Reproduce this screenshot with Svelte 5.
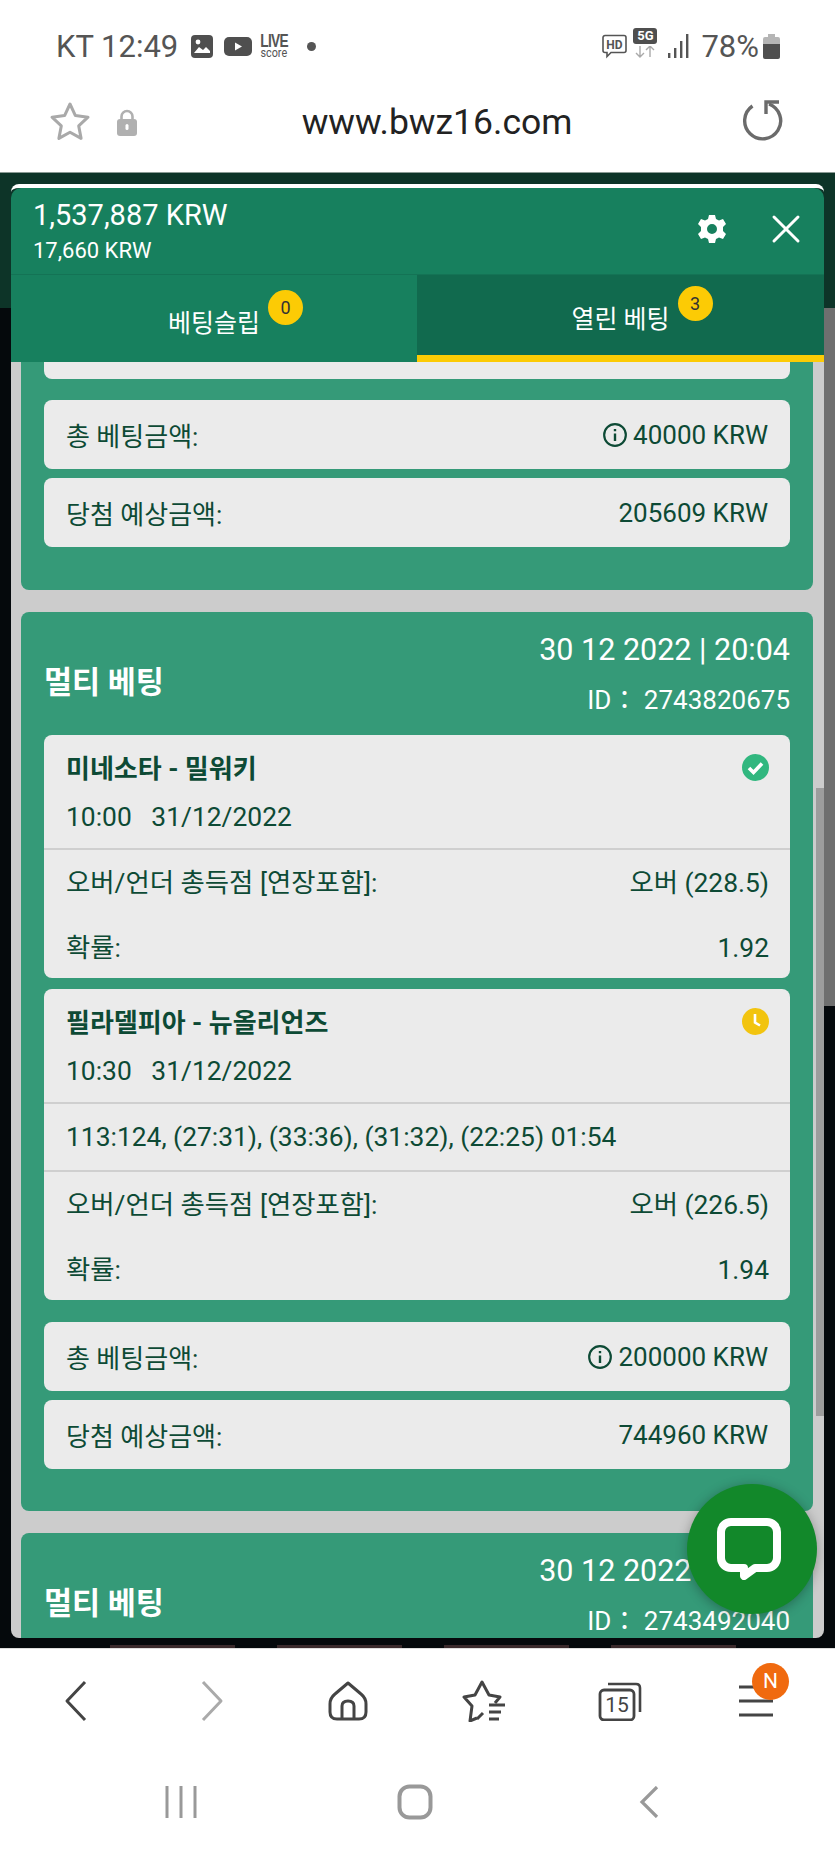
<script>
	const bets = [
		{
			date: '30 12 2022 | 20:04',
			id: '2743820675',
			games: [
				{
					name: '미네소타 - 밀워키',
					time: '10:00',
					day: '31/12/2022',
					state: 'won',
					market: '오버 (228.5)',
					odds: '1.92'
				},
				{
					name: '필라델피아 - 뉴올리언즈',
					time: '10:30',
					day: '31/12/2022',
					state: 'live',
					score: '113:124, (27:31), (33:36), (31:32), (22:25) 01:54',
					market: '오버 (226.5)',
					odds: '1.94'
				}
			],
			stake: '200000 KRW',
			payout: '744960 KRW'
		}
	];
	const thumbs = [1, 2, 3, 4];
</script>

<div class="phone">
	<header class="status">
		<span class="status-text">KT 12:49</span>
		<svg class="ic-photo" width="22" height="23" viewBox="0 0 22 23">
			<rect width="22" height="23" rx="4" fill="#4f4f4f" />
			<circle cx="7" cy="7" r="2.4" fill="#fff" />
			<path d="M3 18l5-6 4 3 3-3 4 4v2H3z" fill="#fff" />
		</svg>
		<svg class="ic-yt" width="28" height="19" viewBox="0 0 28 19">
			<rect width="28" height="19" rx="5" fill="#4f4f4f" />
			<path d="M11 5.5l7 4-7 4z" fill="#fff" />
		</svg>
		<span class="live"><b>LIVE</b><i>score</i></span>
		<span class="dot"></span>
		<span class="spacer"></span>
		<svg class="ic-hd" width="25" height="25" viewBox="0 0 25 25">
			<path d="M3 1.5h19a2 2 0 0 1 2 2v13a2 2 0 0 1-2 2H9l-4 4v-4H3a2 2 0 0 1-2-2v-13a2 2 0 0 1 2-2z" fill="none" stroke="#555" stroke-width="1.6" />
			<text x="12.5" y="14.5" text-anchor="middle" class="hd-label">HD</text>
		</svg>
		<span class="net">
			<span class="net-5g">5G</span>
			<svg width="22" height="12" viewBox="0 0 22 12">
				<path d="M6 0v11M2 7l4 4 4-4M16 11V0M12 4l4-4 4 4" fill="none" stroke="#aaa" stroke-width="1.4" />
			</svg>
		</span>
		<svg class="ic-signal" width="21" height="24" viewBox="0 0 21 24">
			<rect x="0" y="19" width="2.400" height="5" fill="#555" />
			<rect x="6" y="14" width="2.400" height="10" fill="#555" />
			<rect x="12" y="7" width="2.400" height="17" fill="#555" />
			<rect x="18" y="0" width="2.400" height="24" fill="#555" />
		</svg>
		<span class="status-text pct">78%</span>
		<svg class="ic-batt" width="17" height="25" viewBox="0 0 17 25">
			<path d="M5 0h7v3h3a2 2 0 0 1 2 2v5H0V5a2 2 0 0 1 2-2h3z" fill="#b5b5b5" />
			<path d="M0 10h17v13a2 2 0 0 1-2 2H2a2 2 0 0 1-2-2z" fill="#4f4f4f" />
		</svg>
	</header>

	<div class="urlbar">
		<svg class="ic-star" width="42" height="42" viewBox="0 0 42 42">
			<path d="M21 3l5.4 11.6 12.6 1.6-9.300 8.700 2.400 12.500L21 31.200 9.900 37.400l2.400-12.500L3 16.200l12.600-1.600z" fill="none" stroke="#a9a9a9" stroke-width="3" stroke-linejoin="round" />
		</svg>
		<svg class="ic-lock" width="20" height="27" viewBox="0 0 20 27">
			<path d="M4.500 12V7.500a5.500 5.500 0 0 1 11 0V12" fill="none" stroke="#b0b0b0" stroke-width="2.600" />
			<rect y="10" width="20" height="17" rx="3" fill="#b0b0b0" />
			<rect x="8.500" y="15" width="3" height="6" rx="1.500" fill="#fff" />
		</svg>
		<span class="url">www.bwz16.com</span>
		<svg class="ic-reload" width="42" height="42" viewBox="0 0 42 42">
			<path d="M11.500 7A18 18 0 1 0 28 5" fill="none" stroke="#6b6b6b" stroke-width="3.400" />
			<path d="M38 3H25v12" fill="none" stroke="#6b6b6b" stroke-width="3.400" />
		</svg>
	</div>

	<div class="stage">
		<section class="panel">
			<div class="panel-top">
				<div class="balance">
					<div class="balance-main">1,537,887 KRW</div>
					<div class="balance-sub">17,660 KRW</div>
				</div>
				<svg class="ic-gear" width="30" height="30" viewBox="0 0 30 30">
					<path fill="#fff" fill-rule="evenodd" d="M12 1h6l1 4 3 1.500 4-1.500 3 5-3 3v4l3 3-3 5-4-1.500L19 25l-1 4h-6l-1-4-3-1.500L4 25l-3-5 3-3v-4L1 10l3-5 4 1.500L11 5zM15 10a5 5 0 1 0 0 10 5 5 0 0 0 0-10z" />
				</svg>
				<svg class="ic-close" width="30" height="30" viewBox="0 0 30 30">
					<path d="M3 3l24 24M27 3L3 27" stroke="#fff" stroke-width="3" stroke-linecap="round" />
				</svg>
			</div>
			<nav class="tabs">
				<div class="tab">
					<span class="tab-label">베팅슬립<span class="badge">0</span></span>
				</div>
				<div class="tab active">
					<span class="tab-label">열린 베팅<span class="badge">3</span></span>
				</div>
			</nav>
			<div class="body">
				<div class="scroller">
					<article class="bet first">
						<div class="stub"></div>
						<div class="summary">
							<span>총 베팅금액:</span>
							<span class="amount">
								<svg width="26" height="26" viewBox="0 0 24 24">
									<circle cx="12" cy="12" r="10" fill="none" stroke="#0d4a35" stroke-width="2" />
									<path d="M12 10.500v7M12 6.500v2" stroke="#0d4a35" stroke-width="2.200" />
								</svg>
								40000 KRW
							</span>
						</div>
						<div class="summary">
							<span>당첨 예상금액:</span>
							<span>205609 KRW</span>
						</div>
					</article>

					{#each bets as bet}
						<article class="bet">
							<div class="bet-head">
								<h2>멀티 베팅</h2>
								<div class="bet-meta">
									<div class="bet-date">{bet.date}</div>
									<div class="bet-id">ID： {bet.id}</div>
								</div>
							</div>
							<div class="games">
								{#each bet.games as game}
									<div class="game">
										<div class="game-head">
											<div>
												<div class="game-name">{game.name}</div>
												<div class="game-time">{game.time}&nbsp;&nbsp; {game.day}</div>
											</div>
											{#if game.state === 'won'}
												<svg class="state" width="27" height="27" viewBox="0 0 27 27">
													<circle cx="13.500" cy="13.500" r="13.500" fill="#31b77f" />
													<path d="M7 14l4.500 4.500L20 9.500" fill="none" stroke="#fff" stroke-width="3.600" />
												</svg>
											{:else}
												<svg class="state" width="27" height="27" viewBox="0 0 27 27">
													<circle cx="13.500" cy="13.500" r="13.500" fill="#f2c40f" />
													<path d="M13 6v8.500l5 3" fill="none" stroke="#fff" stroke-width="2.600" />
												</svg>
											{/if}
										</div>
										{#if game.score}
											<div class="game-score">{game.score}</div>
										{/if}
										<div class="game-rows">
											<div class="game-row">
												<span>오버/언더 총득점 [연장포함]:</span>
												<span>{game.market}</span>
											</div>
											<div class="game-row">
												<span>확률:</span>
												<span>{game.odds}</span>
											</div>
										</div>
									</div>
								{/each}
							</div>
							<div class="summary">
								<span>총 베팅금액:</span>
								<span class="amount">
									<svg width="26" height="26" viewBox="0 0 24 24">
										<circle cx="12" cy="12" r="10" fill="none" stroke="#0d4a35" stroke-width="2" />
										<path d="M12 10.500v7M12 6.500v2" stroke="#0d4a35" stroke-width="2.200" />
									</svg>
									{bet.stake}
								</span>
							</div>
							<div class="summary">
								<span>당첨 예상금액:</span>
								<span>{bet.payout}</span>
							</div>
						</article>
					{/each}

					<article class="bet">
						<div class="bet-head">
							<h2>멀티 베팅</h2>
							<div class="bet-meta">
								<div class="bet-date">30 12 2022 | 19:12</div>
								<div class="bet-id">ID： 2743492040</div>
							</div>
						</div>
					</article>
				</div>
				<div class="track"><div class="thumb"></div></div>
			</div>
			<button class="chat" aria-label="chat">
				<svg width="64" height="62" viewBox="0 0 64 62">
					<path d="M14 4h36a10 10 0 0 1 10 10v26a10 10 0 0 1-10 10H38l-11 8v-8H14A10 10 0 0 1 4 40V14A10 10 0 0 1 14 4z" fill="none" stroke="#fff" stroke-width="8" stroke-linejoin="round" />
				</svg>
			</button>
		</section>
		<div class="thumbs">
			{#each thumbs as t}
				<span class="thumbnail"></span>
			{/each}
		</div>
	</div>

	<nav class="browser-nav">
		<svg width="24" height="42" viewBox="0 0 24 42">
			<path d="M21 2L3 21l18 19" fill="none" stroke="#444" stroke-width="3" stroke-linejoin="round" />
		</svg>
		<svg width="24" height="42" viewBox="0 0 24 42">
			<path d="M3 2l18 19L3 40" fill="none" stroke="#aaa" stroke-width="3" stroke-linejoin="round" />
		</svg>
		<svg width="40" height="40" viewBox="0 0 40 40">
			<path d="M20 2L33 13Q38 17 38 23v8q0 7-7 7H9q-7 0-7-7v-8q0-6 5-10z" fill="none" stroke="#444" stroke-width="3" stroke-linejoin="round" />
			<path d="M14 37V25q0-5 6-5t6 5v12" fill="none" stroke="#444" stroke-width="3" />
		</svg>
		<svg width="44" height="42" viewBox="0 0 44 42">
			<path d="M15 38l-7 3 2-15L2 17l11-2 7-13 7 13 11 2-5 6" fill="none" stroke="#444" stroke-width="3" stroke-linejoin="round" />
			<path d="M15 39l6-6M27 25h16M27 32h12M27 39h10" fill="none" stroke="#444" stroke-width="3" />
		</svg>
		<span class="tabs-ic">
			<svg width="44" height="40" viewBox="0 0 44 40">
				<path d="M10 3h28q4 0 4 4v24" fill="none" stroke="#444" stroke-width="2.600" />
				<rect x="2" y="9" width="34" height="30" rx="4" fill="#fff" stroke="#444" stroke-width="2.800" />
			</svg>
			<span class="tabs-count">15</span>
		</span>
		<span class="menu-ic">
			<svg width="34" height="34" viewBox="0 0 34 34">
				<path d="M0 3h34M0 17h34M0 31h34" stroke="#444" stroke-width="3.200" />
			</svg>
			<span class="menu-badge">N</span>
		</span>
	</nav>

	<div class="system-nav">
		<svg width="32" height="32" viewBox="0 0 32 32">
			<path d="M2 0v32M16 0v32M30 0v32" stroke="#999" stroke-width="3" />
		</svg>
		<svg width="36" height="36" viewBox="0 0 36 36">
			<rect x="2.500" y="2.500" width="31" height="31" rx="10" fill="none" stroke="#999" stroke-width="4" />
		</svg>
		<svg width="20" height="32" viewBox="0 0 20 32">
			<path d="M18 1L3 16l15 15" fill="none" stroke="#999" stroke-width="3.200" />
		</svg>
	</div>
</div>

<style>
	:global(body) {
		margin: 0;
		background: #fff;
	}

	.phone {
		width: 835px;
		height: 1856px;
		display: flex;
		flex-direction: column;
		overflow: hidden;
		font-family: Roboto, 'Noto Sans CJK KR', sans-serif;
	}

	/* --- Status bar --- */
	.status {
		height: 92px;
		box-sizing: border-box;
		padding: 0 55px 0 56px;
		display: flex;
		align-items: center;
		flex-shrink: 0;
	}
	.status-text {
		font-size: 31px;
		color: #555;
		white-space: nowrap;
	}
	.ic-photo {
		margin-left: 13px;
	}
	.ic-yt {
		margin-left: 11px;
	}
	.live {
		margin-left: 8px;
		width: 28px;
		display: flex;
		flex-direction: column;
		align-items: center;
		color: #555;
		line-height: 1;
	}
	.live b {
		font-size: 19px;
		line-height: 15px;
		font-family: 'Liberation Sans', sans-serif;
		letter-spacing: -1px;
		transform: scaleX(0.72);
	}
	.live i {
		font-style: normal;
		font-size: 12px;
		line-height: 11px;
		transform: scaleX(0.9);
	}
	.dot {
		margin-left: 19px;
		width: 9px;
		height: 9px;
		border-radius: 50%;
		background: #555;
	}
	.spacer {
		flex: 1;
	}
	.hd-label {
		font: bold 12px Roboto, sans-serif;
		fill: #555;
	}
	.net {
		margin-left: 6px;
		width: 24px;
		display: flex;
		flex-direction: column;
		align-items: center;
		margin-top: -6px;
		gap: 2px;
	}
	.net-5g {
		width: 24px;
		height: 16px;
		border-radius: 3px;
		background: #4f4f4f;
		color: #fff;
		font: bold 13px/16px Roboto, sans-serif;
		text-align: center;
	}
	.ic-signal {
		margin-left: 11px;
	}
	.pct {
		margin-left: 12px;
	}
	.ic-batt {
		margin-left: 4px;
	}

	/* --- Url bar --- */
	.urlbar {
		height: 80px;
		box-sizing: border-box;
		padding: 0 52px 20px 49px;
		display: flex;
		align-items: center;
		flex-shrink: 0;
		background: #fff;
	}
	.ic-lock {
		margin-left: 26px;
	}
	.url {
		flex: 1;
		text-align: center;
		font-size: 35.5px;
		color: #222;
		padding-right: 4px;
	}
	.ic-reload {
		margin-bottom: 4px;
	}

	/* --- Stage behind the betting panel --- */
	.stage {
		flex: 1;
		min-height: 0;
		position: relative;
		display: flex;
		flex-direction: column;
		box-sizing: border-box;
		padding: 11px 0 0 11px;
		background-color: #05090c;
		background-image:
			linear-gradient(#0d3428, #0d3428),
			linear-gradient(#6f6f6f, #6f6f6f);
		background-repeat: no-repeat;
		background-size:
			100% 135px,
			11px 833px;
		background-position:
			0 0,
			100% 0;
		border-top: 1px solid #8a9a94;
	}

	.panel {
		flex: 1;
		min-height: 0;
		width: 813px;
		position: relative;
		display: flex;
		flex-direction: column;
		border-radius: 8px;
		overflow: hidden;
		border-top: 4px solid #fff;
	}
	.panel-top {
		height: 86px;
		flex-shrink: 0;
		box-sizing: border-box;
		padding: 0 23px 0 22px;
		display: flex;
		align-items: center;
		background: #17805e;
		color: #fff;
		border-radius: 10px 10px 0 0;
	}
	.balance {
		flex: 1;
	}
	.balance-main {
		font-size: 29px;
		line-height: 36px;
	}
	.balance-sub {
		font-size: 22px;
		line-height: 30px;
		margin-top: 3px;
	}
	.ic-gear {
		margin: 0 44px 4px 0;
	}
	.ic-close {
		margin-bottom: 4px;
	}

	.tabs {
		height: 88px;
		flex-shrink: 0;
		display: grid;
		grid-template-columns: 406px 407px;
		background: #17805e;
		border-top: 1px solid #147355;
		box-sizing: border-box;
	}
	.tab {
		display: flex;
		justify-content: center;
		align-items: center;
		color: #fff;
		font-size: 25px;
		padding-top: 4px;
		box-sizing: border-box;
	}
	.tab.active {
		background: #116a4e;
		border-bottom: 7px solid #fccb05;
	}
	.tab-label {
		position: relative;
	}
	.badge {
		position: absolute;
		left: calc(100% + 8px);
		top: -13px;
		width: 35px;
		height: 35px;
		border-radius: 50%;
		background: #fccb05;
		color: #333;
		font-size: 18px;
		line-height: 35px;
		text-align: center;
	}

	/* --- Scrolling list --- */
	.body {
		flex: 1;
		min-height: 0;
		display: flex;
		background: #cccccc;
		overflow: hidden;
	}
	.scroller {
		flex: 1;
		min-width: 0;
		padding: 0 3px 0 10px;
	}
	.track {
		width: 8px;
		flex-shrink: 0;
	}
	.thumb {
		margin-top: 426px;
		height: 628px;
		background: #9d9d9d;
	}

	.bet {
		background: #359a78;
		border-radius: 8px;
		padding: 0 23px 42px;
		margin-bottom: 22px;
		color: #fff;
	}
	.bet.first {
		border-radius: 0 0 8px 8px;
		padding-bottom: 43px;
	}
	.stub {
		height: 17px;
		background: #ebebeb;
		border-radius: 0 0 8px 8px;
		margin-bottom: 21px;
	}
	.bet-head {
		height: 123px;
		display: flex;
		justify-content: space-between;
		align-items: center;
	}
	.bet-head h2 {
		margin: 12px 0 0;
		font-size: 30.5px;
		font-weight: 700;
	}
	.bet-meta {
		text-align: right;
	}
	.bet-date {
		font-size: 30.5px;
		line-height: 40px;
		margin-bottom: 13px;
	}
	.bet-id {
		font-size: 26px;
		line-height: 34px;
	}

	.games {
		display: flex;
		flex-direction: column;
		gap: 11px;
		margin-bottom: 22px;
	}
	.game {
		background: #ebebeb;
		border-radius: 8px;
		color: #0d4a35;
		font-size: 26.4px;
	}
	.game-head {
		padding: 15px 21px 0 22px;
		display: flex;
		justify-content: space-between;
		align-items: flex-start;
		border-bottom: 2px solid #cfcfcf;
		height: 98px;
	}
	.game-name {
		font-weight: 700;
		line-height: 38px;
		font-size: 26px;
	}
	.game-time {
		line-height: 38px;
		margin-top: 10px;
	}
	.state {
		margin-top: 4px;
	}
	.game-score {
		height: 66px;
		line-height: 66px;
		padding: 0 22px;
		border-bottom: 2px solid #cfcfcf;
	}
	.game-rows {
		padding: 15px 21px 12px 22px;
	}
	.game-row {
		display: flex;
		justify-content: space-between;
		line-height: 36px;
		margin-bottom: 29px;
	}
	.game-row:last-child {
		margin-bottom: 0;
	}

	.summary {
		height: 69px;
		background: #ebebeb;
		border-radius: 8px;
		padding: 0 22px;
		display: flex;
		justify-content: space-between;
		align-items: center;
		color: #0d4a35;
		font-size: 26px;
		margin-bottom: 9px;
	}
	.summary:last-child {
		margin-bottom: 0;
	}
	.amount {
		display: flex;
		align-items: center;
		gap: 5px;
	}

	.chat {
		position: absolute;
		right: 7px;
		bottom: 24px;
		width: 130px;
		height: 130px;
		padding: 0 6px 0 0;
		border: 0;
		border-radius: 50%;
		background: #12882a;
		box-shadow: 0 2px 12px rgba(0, 0, 0, 0.3);
		display: flex;
		align-items: center;
		justify-content: center;
	}

	.thumbs {
		height: 10px;
		flex-shrink: 0;
		display: flex;
		align-items: flex-end;
		gap: 42px;
		padding-left: 99px;
	}
	.thumbnail {
		width: 125px;
		height: 3px;
		background: #3a2a2c;
	}

	/* --- Browser nav --- */
	.browser-nav {
		height: 104px;
		flex-shrink: 0;
		box-sizing: border-box;
		padding: 0 8px;
		display: grid;
		grid-template-columns: repeat(6, 136px);
		justify-items: center;
		align-items: center;
		border-top: 1px solid #ddd;
		background: #fff;
	}
	.tabs-ic {
		position: relative;
		display: flex;
	}
	.tabs-count {
		position: absolute;
		left: 2px;
		top: 9px;
		width: 34px;
		text-align: center;
		font-size: 21px;
		line-height: 30px;
		color: #444;
	}
	.menu-ic {
		position: relative;
		display: flex;
	}
	.menu-badge {
		position: absolute;
		left: 13px;
		top: -21px;
		width: 37px;
		height: 37px;
		border-radius: 50%;
		background: #f06a0f;
		color: #fff;
		font-size: 21px;
		line-height: 37px;
		text-align: center;
	}

	.system-nav {
		height: 104px;
		flex-shrink: 0;
		box-sizing: border-box;
		padding: 0 0 4px 64px;
		display: grid;
		grid-template-columns: repeat(3, 234px);
		justify-items: center;
		align-items: center;
		background: #fff;
	}
</style>
